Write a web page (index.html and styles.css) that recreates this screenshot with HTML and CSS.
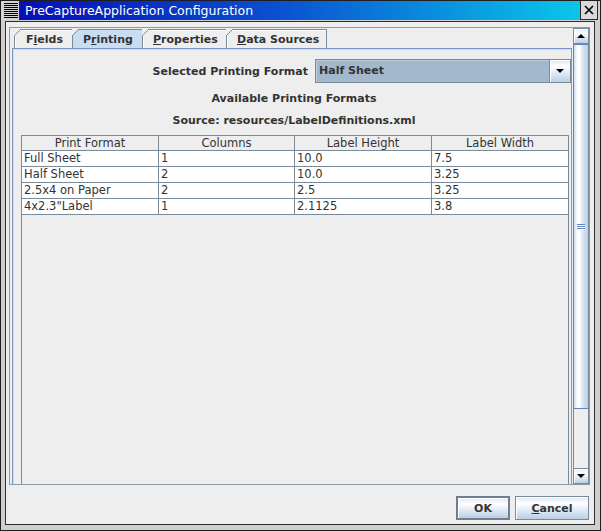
FILE: index.html
```html
<!DOCTYPE html>
<html>
<head>
<meta charset="utf-8">
<title>PreCaptureApplication Configuration</title>
<link rel="stylesheet" href="styles.css">
</head>
<body>
<div class="window">
  <div class="titlebar">
    <div class="menu-btn">
      <svg width="14" height="15" viewBox="0 0 14 15">
        <g fill="#000">
          <rect x="0" y="0" width="14" height="1"/><rect x="0" y="2" width="14" height="1"/>
          <rect x="0" y="4" width="14" height="1"/><rect x="0" y="6" width="14" height="1"/>
          <rect x="0" y="8" width="14" height="1"/><rect x="0" y="10" width="14" height="1"/>
          <rect x="0" y="12" width="14" height="1"/><rect x="0" y="14" width="14" height="1"/>
        </g>
      </svg>
    </div>
    <div class="title">PreCaptureApplication Configuration</div>
    <div class="close-area">
      <div class="close-btn">
        <svg width="10" height="10" viewBox="0 0 10 10"><path d="M1 1 L9 9 M9 1 L1 9" stroke="#000" stroke-width="1.6" fill="none"/></svg>
      </div>
    </div>
  </div>
  <div class="frame">
    <div class="content">
      <div class="scrollpane">
        <div class="viewport">
          <div class="tabs">
            <div class="tab">F<u>i</u>elds</div>
            <div class="tab selected">P<u>r</u>inting</div>
            <div class="tab"><u>P</u>roperties</div>
            <div class="tab last"><u>D</u>ata Sources</div>
          </div>
          <div class="tabpanel">
            <div class="format-row">
              <span class="label">Selected Printing Format</span>
              <div class="combo">
                <span class="combo-value">Half Sheet</span>
                <span class="combo-btn">
                  <svg width="8" height="4" viewBox="0 0 8 4"><path d="M0 0 H8 L4 4 Z" fill="#000"/></svg>
                </span>
              </div>
            </div>
            <div class="caption first">Available Printing Formats</div>
            <div class="caption">Source: resources/LabelDefinitions.xml</div>
            <div class="table-scroll">
              <table class="grid">
                <colgroup><col class="c1"><col class="c2"><col class="c3"><col class="c4"></colgroup>
                <thead>
                  <tr><th>Print Format</th><th>Columns</th><th>Label Height</th><th>Label Width</th></tr>
                </thead>
                <tbody>
                  <tr><td>Full Sheet</td><td>1</td><td>10.0</td><td>7.5</td></tr>
                  <tr><td>Half Sheet</td><td>2</td><td>10.0</td><td>3.25</td></tr>
                  <tr><td>2.5x4 on Paper</td><td>2</td><td>2.5</td><td>3.25</td></tr>
                  <tr><td>4x2.3"Label</td><td>1</td><td>2.1125</td><td>3.8</td></tr>
                </tbody>
              </table>
            </div>
          </div>
        </div>
        <div class="vscroll">
          <div class="sb-btn"><svg width="8" height="4" viewBox="0 0 8 4"><path d="M0 4 H8 L4 0 Z" fill="#000"/></svg></div>
          <div class="thumb">
            <svg width="8" height="6" viewBox="0 0 8 6">
              <rect x="0" y="0" width="8" height="1" fill="#6382bf"/><rect x="0" y="1" width="8" height="1" fill="#fff"/>
              <rect x="0" y="2" width="8" height="1" fill="#6382bf"/><rect x="0" y="3" width="8" height="1" fill="#fff"/>
              <rect x="0" y="4" width="8" height="1" fill="#6382bf"/><rect x="0" y="5" width="8" height="1" fill="#fff"/>
            </svg>
          </div>
          <div class="track"></div>
          <div class="sb-btn"><svg width="8" height="4" viewBox="0 0 8 4"><path d="M0 0 H8 L4 4 Z" fill="#000"/></svg></div>
        </div>
      </div>
      <div class="buttons">
        <button class="btn default">OK</button>
        <button class="btn cancel"><u>C</u>ancel</button>
      </div>
    </div>
  </div>
</div>
</body>
</html>
```

FILE: styles.css
```css
* { box-sizing: border-box; }

body {
  margin: 0;
  background: #ffffff;
  font-family: "DejaVu Sans", "Noto Sans", sans-serif;
  color: #333333;
}

.window {
  width: 601px;
  height: 531px;
  border: 1px solid #1e1e1e;
  background: #cfcfcf;
  display: flex;
  flex-direction: column;
}

/* ---------- title bar ---------- */
.titlebar {
  height: 19px;
  display: flex;
  flex: 0 0 19px;
}

.menu-btn {
  width: 19px;
  height: 19px;
  background: #d4d4d4;
  border-right: 1px solid #2a2a2a;
  display: flex;
  align-items: center;
  justify-content: center;
  padding-left: 1px;
}

.title {
  flex: 1;
  background: linear-gradient(to right, #0610b4 0%, #0a4fd0 45%, #0ac6ea 100%);
  color: #ffffff;
  font-size: 12.5px;
  line-height: 19px;
  padding-left: 5px;
  white-space: nowrap;
}

.close-area {
  width: 20px;
  background: #cfcfcf;
  display: flex;
}

.close-btn {
  width: 18px;
  height: 19px;
  border: 1px solid #2a2a2a;
  border-top: none;
  background: #d9d9d9;
  display: flex;
  align-items: center;
  justify-content: center;
}

/* ---------- frame ---------- */
.frame {
  flex: 1;
  padding: 1px 5px 5px 4px;
  display: flex;
}

.content {
  flex: 1;
  border: 1px solid #2e2e2e;
  background: #eeeeee;
  display: flex;
  flex-direction: column;
  padding: 5px 4px 4px 3px;
}

/* ---------- scroll pane ---------- */
.scrollpane {
  height: 458px;
  width: 581px;
  border: 1px solid #8c9aa8;
  display: flex;
  overflow: hidden;
}

.viewport {
  width: 563px;
  height: 456px;
  overflow: hidden;
  display: flex;
  flex-direction: column;
}

.tabs {
  display: flex;
  padding: 1px 0 0 4px;
  height: 20px;
  flex: 0 0 20px;
}

.tab {
  position: relative;
  height: 19px;
  border-top: 1px solid #7a8a99;
  border-left: 1px solid #7a8a99;
  background: #eeeeee;
  font-size: 11px;
  font-weight: bold;
  line-height: 18px;
  padding-top: 1px;
  padding-left: 11px;
  box-shadow: inset 1px 1px 0 #ffffff;
}
.tab:nth-child(1) { width: 58px; }
.tab:nth-child(2) { width: 70px; padding-left: 10px; }
.tab:nth-child(3) { width: 84px; padding-left: 10px; }
.tab:nth-child(4) { width: 101px; padding-left: 10px; }
.tab.last { border-right: 1px solid #7a8a99; }

.tab.selected {
  background: #c8ddf2;
  box-shadow: none;
}

.tab::before {
  content: "";
  position: absolute;
  top: -1px;
  left: -1px;
  width: 7px;
  height: 7px;
  background: linear-gradient(to bottom right, #eeeeee 0, #eeeeee calc(50% - 0.6px), #7a8a99 calc(50% - 0.6px), #7a8a99 calc(50% + 0.6px), transparent calc(50% + 0.6px));
}

.tab u, .btn u {
  text-decoration: underline;
  text-underline-offset: 1px;
}

.tabpanel {
  margin-left: 2px;
  width: 560px;
  height: 480px;
  flex: 0 0 480px;
  border: 1px solid #7b98c9;
  border-bottom: none;
  box-shadow: inset 1px 1px 0 #c8ddf2;
  display: flex;
  flex-direction: column;
}

.format-row {
  display: flex;
  justify-content: flex-end;
  align-items: center;
  gap: 7px;
  margin-top: 10px;
  height: 24px;
}

.label {
  font-size: 11px;
  font-weight: bold;
}

.combo {
  width: 256px;
  height: 24px;
  border: 1px solid #7a8a99;
  display: flex;
  background: #a3b8cc;
}

.combo-value {
  flex: 1;
  font-size: 11px;
  font-weight: bold;
  line-height: 22px;
  padding-left: 3px;
  box-shadow: inset 1px 1px 0 #b9cadb;
}

.combo-btn {
  width: 21px;
  border-left: 1px solid #7a8a99;
  background: linear-gradient(#dde8f3 0%, #ffffff 30%, #e6eef7 55%, #b8cfe5 100%);
  display: flex;
  align-items: center;
  justify-content: center;
  box-shadow: inset 1px 1px 0 #ffffff;
}

.caption {
  text-align: center;
  font-size: 11px;
  font-weight: bold;
  line-height: 20px;
  height: 20px;
  margin-top: 2px;
  padding-left: 4px;
}
.caption.first { margin-top: 6px; }

/* ---------- table ---------- */
.table-scroll {
  margin-top: 4px;
  margin-left: 8px;
  width: 548px;
  height: 400px;
  flex: 0 0 400px;
  border: 1px solid #7a8a99;
  border-bottom: none;
  background: #eeeeee;
}

.grid {
  width: 546px;
  border-collapse: separate;
  border-spacing: 0;
  table-layout: fixed;
  font-size: 11.5px;
}
.grid .c1 { width: 137px; }
.grid .c2 { width: 136px; }
.grid .c3 { width: 137px; }
.grid .c4 { width: 136px; }

.grid th {
  height: 15px;
  font-weight: normal;
  text-align: center;
  background: #eeeeee;
  border-right: 1px solid #7a8a99;
  border-bottom: 1px solid #7a8a99;
  padding: 0;
  line-height: 14px;
  color: #333333;
}

.grid td {
  height: 16px;
  background: #ffffff;
  border-right: 1px solid #7a8a99;
  border-bottom: 1px solid #7a8a99;
  padding: 0 0 0 2px;
  line-height: 15px;
  white-space: nowrap;
  color: #333333;
}
.grid th:last-child, .grid td:last-child { border-right: none; }

/* ---------- vertical scrollbar ---------- */
.vscroll {
  width: 16px;
  height: 456px;
  display: flex;
  flex-direction: column;
  background: #eeeeee;
}

.sb-btn {
  height: 16px;
  flex: 0 0 16px;
  border: 1px solid #7a8a99;
  background: linear-gradient(#dde8f3 0%, #ffffff 30%, #e6eef7 55%, #b8cfe5 100%);
  box-shadow: inset 1px 1px 0 #ffffff;
  display: flex;
  align-items: center;
  justify-content: center;
}

.thumb {
  height: 365px;
  flex: 0 0 365px;
  border: 1px solid #6382bf;
  border-right-color: #7a8a99;
  background: linear-gradient(to right, #c8ddf2 0%, #ffffff 25%, #ffffff 40%, #dde8f3 60%, #b8cfe5 100%);
  display: flex;
  align-items: center;
  justify-content: center;
}

.track {
  flex: 1;
  border-left: 1px solid #7a8a99;
  border-right: 1px solid #7a8a99;
  background: #eeeeee;
}

/* ---------- buttons ---------- */
.buttons {
  display: flex;
  justify-content: flex-end;
  gap: 5px;
  margin-top: 11px;
  height: 24px;
  padding-right: 1px;
}

.btn {
  height: 24px;
  font-family: "DejaVu Sans", "Noto Sans", sans-serif;
  font-size: 11px;
  font-weight: bold;
  color: #333333;
  background: linear-gradient(#dde8f3 0%, #ffffff 30%, #e6eef7 55%, #b8cfe5 100%);
  border: 1px solid #7a8a99;
  box-shadow: inset 1px 1px 0 #ffffff;
  padding: 0;
  margin: 0;
}

.btn.default {
  width: 54px;
  border: 2px solid #6f7f90;
}

.btn.cancel {
  width: 74px;
}
```
